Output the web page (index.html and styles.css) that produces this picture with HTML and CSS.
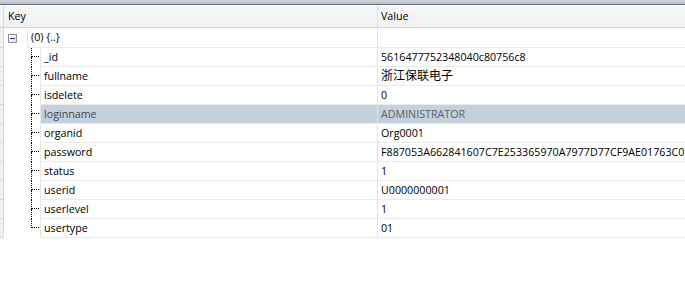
FILE: index.html
```html
<!DOCTYPE html>
<html lang="en">
<head>
    <meta charset="UTF-8">
    <meta name="viewport" content="width=device-width, initial-scale=1.0">
    <title>Document view</title>
    <link rel="stylesheet" href="styles.css">
</head>
<body>
    <div class="grid">
        <div class="topbar"></div>
        <div class="row head">
            <div class="gutter"></div>
            <div class="key">Key</div>
            <div class="value">Value</div>
        </div>

        <div class="row root">
            <div class="gutter"></div>
            <div class="key">
                <span class="toggle"><span class="box"></span></span>
                <span class="cell">(0) {..}</span>
            </div>
            <div class="value"></div>
        </div>

        <div class="row">
            <div class="gutter"></div>
            <div class="key"><span class="branch"><i></i><i></i></span><span class="cell">_id</span></div>
            <div class="value">5616477752348040c80756c8</div>
        </div>
        <div class="row">
            <div class="gutter"></div>
            <div class="key"><span class="branch"><i></i><i></i></span><span class="cell">fullname</span></div>
            <div class="value cjk">浙江保联电子</div>
        </div>
        <div class="row">
            <div class="gutter"></div>
            <div class="key"><span class="branch"><i></i><i></i></span><span class="cell">isdelete</span></div>
            <div class="value">0</div>
        </div>
        <div class="row selected">
            <div class="gutter"></div>
            <div class="key"><span class="branch"><i></i><i></i></span><span class="cell">loginname</span></div>
            <div class="value">ADMINISTRATOR</div>
        </div>
        <div class="row">
            <div class="gutter"></div>
            <div class="key"><span class="branch"><i></i><i></i></span><span class="cell">organid</span></div>
            <div class="value">Org0001</div>
        </div>
        <div class="row">
            <div class="gutter"></div>
            <div class="key"><span class="branch"><i></i><i></i></span><span class="cell">password</span></div>
            <div class="value">F887053A662841607C7E253365970A7977D77CF9AE01763C0</div>
        </div>
        <div class="row">
            <div class="gutter"></div>
            <div class="key"><span class="branch"><i></i><i></i></span><span class="cell">status</span></div>
            <div class="value">1</div>
        </div>
        <div class="row">
            <div class="gutter"></div>
            <div class="key"><span class="branch"><i></i><i></i></span><span class="cell">userid</span></div>
            <div class="value">U0000000001</div>
        </div>
        <div class="row">
            <div class="gutter"></div>
            <div class="key"><span class="branch"><i></i><i></i></span><span class="cell">userlevel</span></div>
            <div class="value">1</div>
        </div>
        <div class="row last">
            <div class="gutter"></div>
            <div class="key"><span class="branch"><i></i><i></i></span><span class="cell">usertype</span></div>
            <div class="value">01</div>
        </div>
    </div>
</body>
</html>
```

FILE: styles.css
```css
body {
    margin: 0;
    background-color: #fff;
    font-family: "Open Sans", "Noto Sans CJK SC", sans-serif;
    font-size: 10.7px;
    color: #000;
}

.grid {
    width: 685px;
    overflow: hidden;
}

.topbar {
    height: 4px;
    background: linear-gradient(#d3d6db, #b8bdc4);
    border-bottom: 1px solid #6c737e;
}

.row {
    display: flex;
    height: 19px;
    line-height: 18px;
    white-space: nowrap;
}

.gutter {
    flex: 0 0 3px;
    background-color: #f0f0f0;
    border-right: 1px solid #dadada;
    border-bottom: 1px solid #dadada;
}

.key {
    flex: 0 0 373px;
    display: flex;
    border-right: 1px solid #e4e4e4;
}

.value {
    flex: 1;
    padding-left: 3px;
    border-bottom: 1px solid #ebebeb;
    overflow: hidden;
}

.cjk {
    font-size: 12px;
}

/* header */
.head {
    height: 23px;
    line-height: 23px;
    background: linear-gradient(#f7f8f9, #eef0f2);
}

.head .gutter {
    background: none;
    border-bottom: 1px solid #d3d4d6;
}

.head .key {
    padding-left: 4px;
    border-bottom: 1px solid #d3d4d6;
    border-right-color: #dfe0e2;
    flex-basis: 369px;
}

.head .value {
    border-bottom-color: #d3d4d6;
}

.root {
    height: 20px;
    line-height: 19px;
}

/* tree column */
.cell {
    flex: 1;
    padding-left: 3px;
    border-left: 1px solid #e6e6e6;
    border-bottom: 1px solid #ebebeb;
}

.toggle {
    flex: 0 0 19px;
    display: flex;
    align-items: center;
    padding-left: 4px;
}

.box {
    width: 7px;
    height: 7px;
    border: 1px solid #8e8f8f;
    background: linear-gradient(135deg, #fff, #e3e3e3);
    display: flex;
    align-items: center;
    justify-content: center;
}

.box::after {
    content: "";
    width: 5px;
    height: 1px;
    background-color: #1c3f8a;
}

.branch {
    flex: 0 0 36px;
    display: flex;
    flex-direction: column;
}

.branch i {
    margin-left: 27px;
    border-left: 1px dotted #000;
}

.branch i:first-child {
    height: 8px;
    width: 7px;
    border-bottom: 1px dotted #000;
}

.branch i:last-child {
    flex: 1;
}

.last .branch i:last-child {
    border-left: none;
}

/* selected row */
.selected .cell,
.selected .value {
    background-color: #c4d0dc;
}

.selected .cell {
    color: #3e4854;
}

.selected .value {
    color: #5e6268;
}
```
